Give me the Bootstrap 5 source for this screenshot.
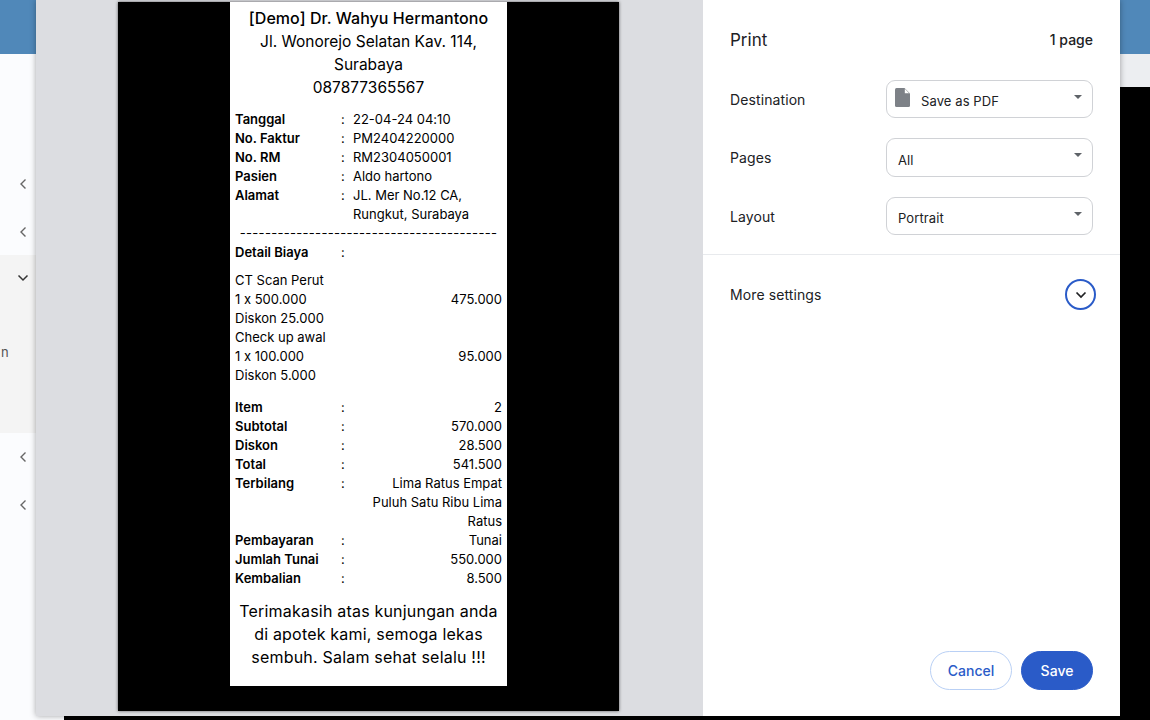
<!DOCTYPE html>
<html lang="en">
<head>
    <meta charset="UTF-8">
    <meta name="viewport" content="width=device-width, initial-scale=1.0">
    <title>Print</title>
    <link href="https://cdn.jsdelivr.net/npm/bootstrap@5.3.0/dist/css/bootstrap.min.css" rel="stylesheet">
    <style>
        html, body {
            height: 720px;
            overflow: hidden;
        }

        body {
            background-color: #000;
            font-family: "Inter", "Liberation Sans", sans-serif;
            font-feature-settings: "calt" 0;
            color: #202124;
        }

        /* page behind the dialog */
        .back-header {
            height: 54px;
            background-color: #5088b9;
        }

        .back-body {
            height: 666px;
        }

        .back-side {
            width: 64px;
            background-color: #fbfcfe;
            padding-top: 106px;
        }

        .side-row {
            height: 47.5px;
            padding: 18px 0 0 18.5px;
        }

        .side-open {
            height: 178px;
            background-color: #f4f4f4;
            padding-top: 19px;
        }

        .side-open svg {
            display: block;
            margin-left: 16.5px;
        }

        .side-letter {
            font-size: 13px;
            color: #555;
            margin: 62px 0 0 0;
            padding-left: 1px;
            line-height: 16px;
        }

        .back-main {
            background-color: #000;
        }

        .back-strip {
            height: 33px;
            background-color: #eceef1;
        }

        /* print dialog */
        .print-dialog {
            position: absolute;
            left: 36px;
            top: 0;
            width: 1084px;
            height: 716px;
            box-shadow: 0 0 6px rgba(0, 0, 0, 0.35);
        }

        .preview-pane {
            width: 667px;
            background-color: #dcdde1;
            padding: 2px 0 0 82px;
        }

        .sheet {
            width: 501px;
            height: 709px;
            background-color: #000;
            box-shadow: 0 0 3px rgba(0, 0, 0, 0.6);
        }

        .receipt {
            width: 277px;
            height: 684px;
            background-color: #fff;
            color: #000;
            padding: 4.5px 5px 0;
            font-size: 13px;
            line-height: 19px;
        }

        .receipt-head {
            font-size: 15.5px;
            line-height: 23px;
            text-align: center;
            margin-bottom: 11.5px;
        }

        .receipt-title {
            font-size: 16px;
            font-weight: 500;
            letter-spacing: 0.05px;
        }

        .info-row {
            display: grid;
            grid-template-columns: 106px 12px 1fr;
        }

        .info-row b {
            font-weight: 600;
        }

        .dash-line {
            white-space: nowrap;
            text-align: center;
            letter-spacing: 0.3px;
        }

        .item-lines {
            margin: 9px 0 13px;
        }

        .receipt-foot {
            font-size: 16px;
            line-height: 23px;
            letter-spacing: 0.2px;
            text-align: center;
            margin-top: 11.5px;
        }

        .settings-pane {
            width: 417px;
            background-color: #fff;
        }

        .settings-top {
            height: 255px;
            padding: 0 27px;
            border-bottom: 1px solid #e8eaed;
        }

        .print-title {
            height: 79.8px;
        }

        .print-title h1 {
            font-size: 17px;
            font-weight: 400;
            margin: 0;
        }

        .page-count {
            font-size: 14px;
            font-weight: 500;
        }

        .set-row {
            height: 38.5px;
            margin-bottom: 20px;
            font-size: 14px;
            letter-spacing: 0.1px;
        }

        .set-row > span {
            width: 156px;
        }

        .fake-select {
            width: 207px;
            height: 38.5px;
            border: 1px solid #d0d2d6;
            border-radius: 9px;
            padding: 6px 10px 0 11px;
            font-size: 13px;
            letter-spacing: 0.1px;
        }

        .fake-select i {
            width: 0;
            height: 0;
            border-left: 4px solid transparent;
            border-right: 4px solid transparent;
            border-top: 4px solid #5f6368;
            margin: -11px 0 0 auto;
        }

        .file-icon {
            margin: -10px 11px 0 -3px;
        }

        .more-row {
            height: 79px;
            padding: 0 24px 0 27px;
            font-size: 14px;
            letter-spacing: 0.1px;
        }

        .more-btn {
            width: 31px;
            height: 31px;
            border: 2px solid #2a5bc8;
            border-radius: 50%;
            background: #fff;
            padding: 0;
        }

        .action-row {
            padding: 0 27px 26px;
            column-gap: 9px;
        }

        .pill-btn {
            height: 39px;
            border-radius: 20px;
            font-size: 14px;
            font-weight: 500;
            padding: 0;
        }

        .pill-cancel {
            width: 82px;
            color: #2a5bc8;
            border: 1px solid #b9d0f5;
            background-color: #fff;
        }

        .pill-save {
            width: 72px;
            color: #fff;
            background-color: #2a5bc8;
            border: 1px solid #2a5bc8;
        }
    </style>
</head>
<body>
    <div class="back-header"></div>
    <div class="back-body d-flex">
        <div class="back-side flex-shrink-0">
            <div class="side-row"><svg class="d-block" width="8" height="12" viewBox="0 0 8 12"><path d="M6.500 1.500 2 6l4.500 4.500" fill="none" stroke="#666" stroke-width="1.400"/></svg></div>
            <div class="side-row"><svg class="d-block" width="8" height="12" viewBox="0 0 8 12"><path d="M6.500 1.500 2 6l4.500 4.500" fill="none" stroke="#666" stroke-width="1.400"/></svg></div>
            <div class="side-open">
                <svg width="12" height="8" viewBox="0 0 12 8"><path d="M1.500 1.500 6 6l4.500-4.500" fill="none" stroke="#333" stroke-width="1.500"/></svg>
                <p class="side-letter">n</p>
            </div>
            <div class="side-row"><svg class="d-block" width="8" height="12" viewBox="0 0 8 12"><path d="M6.500 1.500 2 6l4.500 4.500" fill="none" stroke="#666" stroke-width="1.400"/></svg></div>
            <div class="side-row"><svg class="d-block" width="8" height="12" viewBox="0 0 8 12"><path d="M6.500 1.500 2 6l4.500 4.500" fill="none" stroke="#666" stroke-width="1.400"/></svg></div>
        </div>
        <div class="back-main flex-grow-1">
            <div class="back-strip"></div>
        </div>
    </div>

    <div class="print-dialog d-flex">
        <div class="preview-pane">
            <div class="sheet d-flex justify-content-center">
                <div class="receipt">
                    <div class="receipt-head">
                        <div class="receipt-title">[Demo] Dr. Wahyu Hermantono</div>
                        <div>Jl. Wonorejo Selatan Kav. 114,</div>
                        <div>Surabaya</div>
                        <div>087877365567</div>
                    </div>
                    <div class="info-row"><b>Tanggal</b><span>:</span><span>22-04-24 04:10</span></div>
                    <div class="info-row"><b>No. Faktur</b><span>:</span><span>PM2404220000</span></div>
                    <div class="info-row"><b>No. RM</b><span>:</span><span>RM2304050001</span></div>
                    <div class="info-row"><b>Pasien</b><span>:</span><span>Aldo hartono</span></div>
                    <div class="info-row"><b>Alamat</b><span>:</span><span>JL. Mer No.12 CA,<br>Rungkut, Surabaya</span></div>
                    <div class="dash-line">-----------------------------------------</div>
                    <div class="info-row"><b>Detail Biaya</b><span>:</span><span></span></div>
                    <div class="item-lines">
                        <div>CT Scan Perut</div>
                        <div class="d-flex justify-content-between"><span>1 x 500.000</span><span>475.000</span></div>
                        <div>Diskon 25.000</div>
                        <div>Check up awal</div>
                        <div class="d-flex justify-content-between"><span>1 x 100.000</span><span>95.000</span></div>
                        <div>Diskon 5.000</div>
                    </div>
                    <div class="info-row"><b>Item</b><span>:</span><span class="text-end">2</span></div>
                    <div class="info-row"><b>Subtotal</b><span>:</span><span class="text-end">570.000</span></div>
                    <div class="info-row"><b>Diskon</b><span>:</span><span class="text-end">28.500</span></div>
                    <div class="info-row"><b>Total</b><span>:</span><span class="text-end">541.500</span></div>
                    <div class="info-row"><b>Terbilang</b><span>:</span><span class="text-end">Lima Ratus Empat<br>Puluh Satu Ribu Lima<br>Ratus</span></div>
                    <div class="info-row"><b>Pembayaran</b><span>:</span><span class="text-end">Tunai</span></div>
                    <div class="info-row"><b>Jumlah Tunai</b><span>:</span><span class="text-end">550.000</span></div>
                    <div class="info-row"><b>Kembalian</b><span>:</span><span class="text-end">8.500</span></div>
                    <div class="receipt-foot">
                        <div>Terimakasih atas kunjungan anda</div>
                        <div>di apotek kami, semoga lekas</div>
                        <div>sembuh. Salam sehat selalu !!!</div>
                    </div>
                </div>
            </div>
        </div>

        <div class="settings-pane d-flex flex-column">
            <div class="settings-top">
                <div class="print-title d-flex justify-content-between align-items-center">
                    <h1>Print</h1>
                    <span class="page-count">1 page</span>
                </div>
                <div class="set-row d-flex align-items-center">
                    <span>Destination</span>
                    <div class="fake-select d-flex align-items-center">
                        <svg class="file-icon" width="15" height="19" viewBox="0 0 15 19"><path d="M1.500 0H9.500L15 5.500V17.500Q15 19 13.500 19H1.500Q0 19 0 17.500V1.500Q0 0 1.500 0Z" fill="#7d8187"/><path d="M9.800 0.800V5.200H14.200Z" fill="#fff"/></svg>
                        <span>Save as PDF</span><i></i>
                    </div>
                </div>
                <div class="set-row d-flex align-items-center">
                    <span>Pages</span>
                    <div class="fake-select d-flex align-items-center"><span>All</span><i></i></div>
                </div>
                <div class="set-row d-flex align-items-center">
                    <span>Layout</span>
                    <div class="fake-select d-flex align-items-center"><span>Portrait</span><i></i></div>
                </div>
            </div>
            <div class="more-row d-flex justify-content-between align-items-center">
                <span>More settings</span>
                <button class="more-btn d-flex align-items-center justify-content-center" type="button" aria-label="More settings">
                    <svg width="12" height="8" viewBox="0 0 12 8"><path d="M1.500 1.500 6 6l4.500-4.500" fill="none" stroke="#202124" stroke-width="1.700"/></svg>
                </button>
            </div>
            <div class="action-row mt-auto d-flex justify-content-end">
                <button class="btn pill-btn pill-cancel" type="button">Cancel</button>
                <button class="btn pill-btn pill-save" type="button">Save</button>
            </div>
        </div>
    </div>
</body>
</html>
